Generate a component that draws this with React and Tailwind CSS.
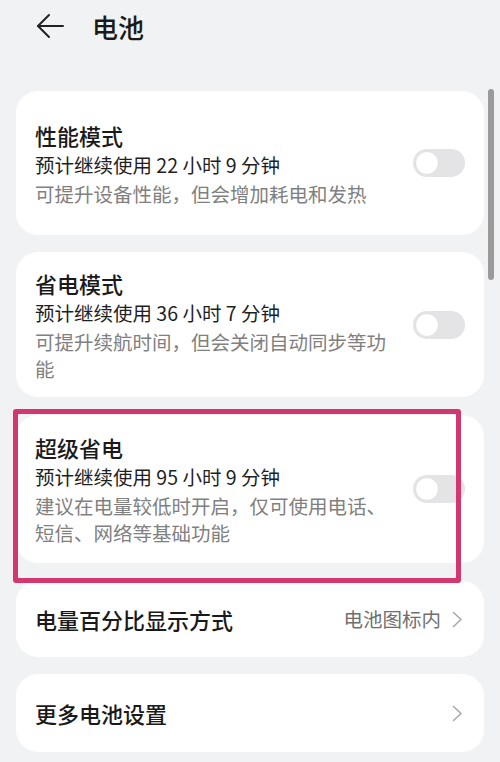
import { useState } from 'react'

const FONT = { fontFamily: '"Noto Sans CJK SC", "Noto Sans", sans-serif' }

function Toggle({ on }) {
  return (
    <div className="h-[28px] w-[52px] shrink-0 rounded-full bg-[#e4e4e6] p-[2px]">
      <div className="h-[24px] w-[24px] rounded-full border border-[#dedede] bg-white" />
    </div>
  )
}

function Chevron() {
  return (
    <svg width="11" height="17" viewBox="0 0 11 17" fill="none" className="shrink-0">
      <polyline points="1.5,1.5 9,8.5 1.5,15.5" stroke="#a8a8a8" strokeWidth="1.6" strokeLinecap="round" strokeLinejoin="round" />
    </svg>
  )
}

function ModeCard({ title, eta, desc, className = '' }) {
  return (
    <div className={`flex items-center gap-[22px] rounded-[22px] bg-white pl-[19px] pr-[19px] ${className}`}>
      <div className="flex-1">
        <div className="text-[22px] font-medium leading-[30px] text-[#1a1a1a]">{title}</div>
        <div className="text-[19.5px] leading-[30px] text-[#1f1f1f]">{eta}</div>
        <div className="text-[19.5px] leading-[27px] text-[#808080]">{desc}</div>
      </div>
      <Toggle />
    </div>
  )
}

function LinkCard({ title, value, className = '' }) {
  return (
    <div className={`flex items-center rounded-[22px] bg-white pl-[19px] pr-[21px] ${className}`}>
      <div className="flex-1 text-[22px] font-medium text-[#1a1a1a]">{title}</div>
      {value && <span className="mr-[11px] text-[19.5px] text-[#6f6f6f]">{value}</span>}
      <Chevron />
    </div>
  )
}

export default function App() {
  return (
    <div className="relative h-[762px] w-[500px] overflow-hidden bg-[#f1f2f4]" style={FONT}>
      <div className="flex h-[91px] items-start pt-[6px]">
        <div className="flex h-[40px] items-center pl-[36px]">
          <svg width="28" height="26" viewBox="0 0 28 26" fill="none">
            <line x1="2" y1="13" x2="27" y2="13" stroke="#222" strokeWidth="2" strokeLinecap="round" />
            <polyline points="13,2 2,13 13,24" stroke="#222" strokeWidth="2" strokeLinecap="round" strokeLinejoin="round" />
          </svg>
          <span className="ml-[28px] text-[26px] font-medium text-[#1a1a1a]">电池</span>
        </div>
      </div>

      <div className="flex flex-col gap-[17px] px-[16px]">
        <ModeCard className="h-[144px]" title="性能模式" eta="预计继续使用 22 小时 9 分钟" desc="可提升设备性能，但会增加耗电和发热" />
        <ModeCard className="h-[145px]" title="省电模式" eta="预计继续使用 36 小时 7 分钟" desc="可提升续航时间，但会关闭自动同步等功能" />
        <ModeCard className="mt-[1px] h-[148px]" title="超级省电" eta="预计继续使用 95 小时 9 分钟" desc="建议在电量较低时开启，仅可使用电话、短信、网络等基础功能" />
        <LinkCard className="mt-[1px] h-[76px]" title="电量百分比显示方式" value="电池图标内" />
        <LinkCard className="h-[78px]" title="更多电池设置" />
      </div>

      <div className="absolute left-[13px] top-[409px] h-[174px] w-[448px] rounded-[3px] border-[5px] border-[#d2386f]" />
      <div className="absolute left-[488px] top-[89px] h-[191px] w-[6px] rounded-full bg-[#9a9a9a]" />
    </div>
  )
}
